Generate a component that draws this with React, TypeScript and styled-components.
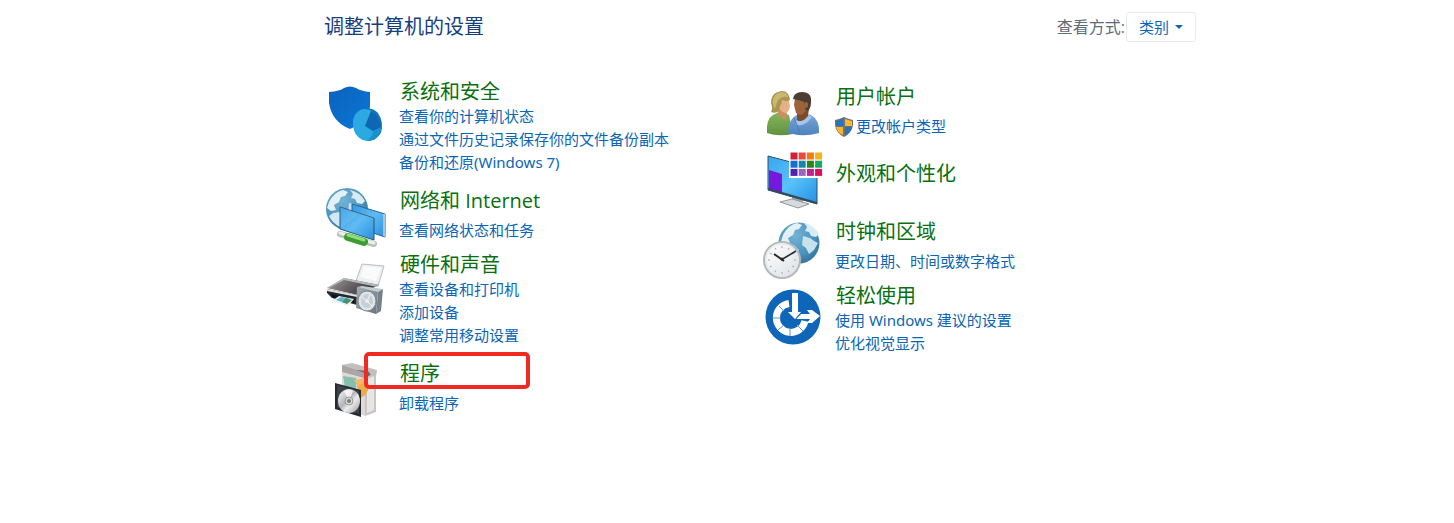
import React from 'react';
import styled, { createGlobalStyle } from 'styled-components';

const GlobalStyle = createGlobalStyle`
  * { box-sizing: border-box; }
  body {
    margin: 0;
    background: #fff;
    font-family: "Open Sans", "Noto Sans CJK SC", sans-serif;
    font-size: 15px;
  }
`;

const Page = styled.main`
  padding: 12px 258px 24px 324px;
`;

const Header = styled.header`
  display: flex;
  align-items: center;
  justify-content: space-between;
  height: 30px;
  margin-bottom: 37px;
`;

const PageTitle = styled.h1`
  margin: 0;
  font-size: 20px;
  line-height: 30px;
  font-weight: 400;
  color: #14407f;
  white-space: nowrap;
`;

const ViewBy = styled.div`
  display: flex;
  align-items: center;
  gap: 1px;
  white-space: nowrap;
`;

const ViewLabel = styled.label`
  font-size: 16px;
  line-height: 30px;
  color: #5f6b76;
`;

const SelectWrap = styled.span`
  display: grid;
  align-items: center;
  width: 70px;

  & > * { grid-area: 1 / 1; }
  & > svg { justify-self: end; margin-right: 13px; pointer-events: none; }
`;

const ViewSelect = styled.select`
  appearance: none;
  width: 100%;
  height: 30px;
  padding: 0 0 0 12px;
  border: 1px solid #e6ebf0;
  border-radius: 3px;
  background: #fff;
  font: inherit;
  color: #0a66b4;
`;

const Columns = styled.div`
  display: grid;
  grid-template-columns: 1fr 1fr;
`;

const Column = styled.div<{ $top?: number }>`
  padding-top: ${({ $top = 0 }) => $top}px;
`;

type Density = 'list' | 'single' | 'bare';

const Item = styled.section<{ $kind: Density }>`
  position: relative;
  display: grid;
  grid-template-columns: 64px 1fr;
  column-gap: 11px;
  min-height: ${({ $kind }) => ($kind === 'bare' ? 71 : 64)}px;
  padding-bottom: ${({ $kind }) => ($kind === 'list' ? 14 : 0)}px;
`;

const Picture = styled.svg`
  width: 64px;
  height: 64px;
  overflow: visible;
`;

const Body = styled.div<{ $kind: Density }>`
  padding-top: ${({ $kind }) => ($kind === 'bare' ? 13 : 0)}px;
  white-space: nowrap;
`;

const ItemTitle = styled.h2<{ $kind: Density }>`
  margin: 0 0 ${({ $kind }) => ($kind === 'single' ? 5 : 0)}px;
  padding-left: 1px;
  font-size: 20px;
  line-height: 26px;
  font-weight: 400;
`;

const TitleLink = styled.a`
  color: #0a700f;
  text-decoration: none;
`;

const Tasks = styled.ul`
  list-style: none;
  margin: 0;
  padding: 0;
  font-family: "Noto Sans", "Noto Sans CJK SC", sans-serif;
`;

const Task = styled.li`
  height: 23px;
  line-height: 23px;
`;

const TaskLink = styled.a`
  display: inline-flex;
  align-items: center;
  gap: 1px;
  white-space: pre;
  color: #0a66b4;
  text-decoration: none;
`;

const Highlight = styled.div`
  position: absolute;
  left: 40px;
  top: -9px;
  width: 166px;
  height: 37px;
  border: 4px solid #f02a22;
  border-radius: 5px;
  pointer-events: none;
`;

const SecurityIcon = () => (
  <Picture viewBox="0 0 64 64" aria-hidden="true">
    <defs>
      <linearGradient id="shield" x1="0" y1="0" x2="1" y2="1">
        <stop offset="0" stopColor="#0b62bd" />
        <stop offset="1" stopColor="#0a78d6" />
      </linearGradient>
    </defs>
    <path d="M5 13Q16 12 20 9Q26 6 32 9Q37 12 46 13V28Q44 42 26 50Q8 43 5 24Z" fill="url(#shield)" />
    <path d="M37 31Q47 27 54 34Q60 43 57 54Q51 62 43 62Z" fill="#1575b9" />
    <ellipse cx="42" cy="46" rx="13" ry="16" fill="#2ba9e1" transform="rotate(-12 42 46)" />
    <path d="M41 47L47 32Q56 36 57 50L49 52Z" fill="#0e67b5" />
    <path d="M49 52L57 48Q58 56 50 61L43 62Q49 57 49 52Z" fill="#1c8fce" />
  </Picture>
);

const Continents = () => (
  <>
    <path d="M-18-7Q-13-17-4-19L1-17L-2-13L-6-12L-8-7L-13-4L-11 1L-16 2L-20-1Z" fill="#e3f0f5" />
    <path d="M3-19Q13-17 18-8L15-5L10-6L8-10L4-11L6-15Z" fill="#d9ebf3" />
    <path d="M-14 4L-7 3L-2 8L-5 12L-7 18Q-15 14-18 7Z" fill="#d3e8f0" />
    <path d="M2-6L9-4L13-1L17 1L13 8L8 12L5 6L1 3Z" fill="#c7e1ed" />
  </>
);

const NetworkIcon = () => (
  <Picture viewBox="0 0 64 64" aria-hidden="true">
    <defs>
      <radialGradient id="globe" cx="0.4" cy="0.3" r="0.75">
        <stop offset="0" stopColor="#74b4d4" />
        <stop offset="0.65" stopColor="#4a93bd" />
        <stop offset="1" stopColor="#346f99" />
      </radialGradient>
      <linearGradient id="screen" x1="0" y1="0" x2="1" y2="1">
        <stop offset="0" stopColor="#2e98e4" />
        <stop offset="0.5" stopColor="#61bbf2" />
        <stop offset="1" stopColor="#2790e1" />
      </linearGradient>
    </defs>
    <circle cx="23" cy="21" r="21" fill="url(#globe)" />
    <g transform="translate(23 21)"><Continents /></g>
    <path d="M28 16L61 26V49L28 38Z" fill="url(#screen)" stroke="#286695" />
    <path d="M59 26L61 26V49L59 48Z" fill="#a9c5d6" />
    <path d="M16 19L50 30V52L16 41Z" fill="url(#screen)" stroke="#2d5670" />
    <path d="M17 41L34 26L50 31V30L16 19Z" fill="#8fd1f7" opacity="0.25" />
    <path d="M16 46L50 56" stroke="#b9bfc0" strokeWidth="6" strokeLinecap="round" />
    <path d="M16 45L50 55" stroke="#eceeee" strokeWidth="3" strokeLinecap="round" />
    <path d="M24 49L40 54" stroke="#3d9d34" strokeWidth="8" strokeLinecap="round" />
    <path d="M24 47L40 52" stroke="#8be07a" strokeWidth="3" strokeLinecap="round" />
  </Picture>
);

const HardwareIcon = () => (
  <Picture viewBox="0 0 64 64" aria-hidden="true">
    <defs>
      <linearGradient id="printer" x1="0" y1="0" x2="1" y2="0.4">
        <stop offset="0" stopColor="#a4a4a6" />
        <stop offset="0.5" stopColor="#6d6769" />
        <stop offset="1" stopColor="#343236" />
      </linearGradient>
      <linearGradient id="speaker" x1="0" y1="0" x2="1" y2="1">
        <stop offset="0" stopColor="#a3adb4" />
        <stop offset="1" stopColor="#68737b" />
      </linearGradient>
    </defs>
    <path d="M38 12L60 14L54 34L32 29Z" fill="#eef0f1" stroke="#b9bec1" />
    <path d="M40 14L57 16L52 29L36 25Z" fill="#fafafa" />
    <path d="M20 26L55 33L34 43L3 36Z" fill="url(#printer)" />
    <path d="M20 26L55 33L53 35L20 28L5 36L3 36Z" fill="#b7b8ba" />
    <path d="M3 37L33 43V53L8 46L3 41Z" fill="#25282c" />
    <path d="M3 37L33 43V45L3 39Z" fill="#e1e4e6" />
    <path d="M7 42L30 47V51L8 45Z" fill="#0b151d" />
    <path d="M15 44L30 47L24 54L8 49Z" fill="#e8f1f3" />
    <path d="M17 45L26 47L21 51L12 48Z" fill="#62b2d0" />
    <path d="M22 46L28 48L23 52L18 50Z" fill="#4a9172" />
    <path d="M33 35L54 39L52 62L32 56Z" fill="url(#speaker)" />
    <path d="M33 35L38 34L59 37L54 40Z" fill="#c5ccd0" />
    <path d="M54 40L59 37L57 59L52 62Z" fill="#76818a" />
    <ellipse cx="43" cy="49" rx="9" ry="10" fill="#dfe4e7" stroke="#7b8890" />
    <ellipse cx="43" cy="49" rx="6" ry="7" fill="#c8cfd4" />
    <path d="M38 45L43 49L46 43M43 49L48 54" stroke="#f3f5f6" fill="none" />
    <circle cx="43" cy="49" r="2" fill="#e9edef" />
  </Picture>
);

const ProgramsIcon = () => (
  <Picture viewBox="0 0 64 64" aria-hidden="true">
    <defs>
      <linearGradient id="disc" x1="0" y1="0" x2="1" y2="1">
        <stop offset="0" stopColor="#fafafa" />
        <stop offset="0.45" stopColor="#b5b5b8" />
        <stop offset="0.6" stopColor="#ededed" />
        <stop offset="1" stopColor="#9c9ca0" />
      </linearGradient>
    </defs>
    <path d="M18 10L41 16V55L18 47Z" fill="#ded9d7" />
    <path d="M41 16L52 12V51L41 55Z" fill="#c9c5c5" />
    <path d="M43 18L50 15V49L43 52Z" fill="#e8e5e4" />
    <path d="M18 10L26 5L52 11L41 17Z" fill="#6d686a" />
    <path d="M18 4L28 2L53 9L52 16L47 14L44 10L22 8L18 11Z" fill="#c3bfc0" />
    <path d="M18 4V11L41 17V12Z" fill="#aaa6a8" />
    <path d="M19 15L32 17V30L21 26Z" fill="#85bfae" />
    <path d="M32 21L42 20Q46 23 44 29Q42 35 36 37L34 29Z" fill="#efaa49" />
    <path d="M30 19L41 17L42 21L34 25Z" fill="#f0ba68" />
    <path d="M11 22L37 29V56L11 48Z" fill="#26292f" />
    <path d="M13 24L35 30V53L13 46Z" fill="#3d424a" />
    <ellipse cx="25" cy="40" rx="11" ry="12" fill="url(#disc)" />
    <path d="M25 40L20 30Q25 27 29 30Z" fill="#fff" opacity="0.75" />
    <ellipse cx="25" cy="40" rx="4" ry="4" fill="#d9d9da" stroke="#97989b" />
    <circle cx="25" cy="40" r="2" fill="#77797d" />
  </Picture>
);

const UsersIcon = () => (
  <Picture viewBox="0 0 64 64" aria-hidden="true">
    <defs>
      <linearGradient id="green" x1="0" y1="0" x2="0" y2="1">
        <stop offset="0" stopColor="#89b55a" />
        <stop offset="1" stopColor="#5f923f" />
      </linearGradient>
      <linearGradient id="blue" x1="0" y1="0" x2="0" y2="1">
        <stop offset="0" stopColor="#7aa9dc" />
        <stop offset="1" stopColor="#4e82bd" />
      </linearGradient>
    </defs>
    <path d="M7 49Q6 35 13 31L19 28L29 31L33 50Q18 53 7 49Z" fill="url(#green)" />
    <path d="M18 24H26L27 31L25 37L18 30Z" fill="#c98f63" />
    <path d="M18 12Q28 10 29 17L30 22Q29 29 25 29Q19 27 18 21Z" fill="#e6b187" />
    <path d="M22 7Q29 7 30 16Q27 18 22 16Q22 20 20 22L19 27Q16 30 11 28Q13 25 11 19Q11 8 22 7Z" fill="#a99650" />
    <path d="M21 8Q27 8 28 13Q20 12 17 18L15 25Q11 18 14 13Q16 9 21 8Z" fill="#c9b870" />
    <path d="M28 49Q28 37 35 32L42 29L51 31Q60 36 59 49Q44 53 33 50Z" fill="url(#blue)" />
    <path d="M37 24H49L48 32Q42 40 37 36Z" fill="#7d4b2b" />
    <path d="M35 14H47Q49 25 43 30Q39 32 36 29L34 21Z" fill="#9d643c" />
    <path d="M33 15Q34 8 42 8Q52 8 51 18Q51 24 48 27L45 25L44 18Q40 16 33 15Z" fill="#4c3c32" />
    <ellipse cx="46" cy="21" rx="2" ry="3" fill="#9d643c" />
    <path d="M36 36Q42 40 49 31L52 33Q45 43 36 41Z" fill="#a6c6ea" />
    <path d="M34 34Q38 42 40 50" stroke="#4d7db5" fill="none" />
  </Picture>
);

const swatches = [
  ['#d02236', '#ea4b3c', '#f57b0c', '#f8b219'],
  ['#1771c9', '#1587a9', '#2b8419', '#18a965'],
  ['#5521b0', '#9866bd', '#c02098', '#d5115d'],
];

const AppearanceIcon = () => (
  <Picture viewBox="0 0 64 64" aria-hidden="true">
    <defs>
      <linearGradient id="desktop" x1="0" y1="0" x2="1" y2="1">
        <stop offset="0" stopColor="#37a4ec" />
        <stop offset="0.5" stopColor="#5ac2fb" />
        <stop offset="1" stopColor="#2490e2" />
      </linearGradient>
    </defs>
    <path d="M32 48L43 51V57L32 55Z" fill="#a2a9af" />
    <path d="M20 54L32 51L49 56L38 60Z" fill="#d7dadd" stroke="#90989f" />
    <path d="M8 8L57 21V56L8 42Z" fill="url(#desktop)" stroke="#2b516d" />
    <path d="M9 22L22 26V46L9 42Z" fill="#7719dc" />
    <path d="M8 42L57 56V54L8 40Z" fill="#344a5b" />
    <rect x="29" y="3" width="34" height="27" fill="#fff" />
    {swatches.map((row, r) =>
      row.map((color, c) => (
        <rect key={color} x={30.5 + c * 8.2} y={4.5 + r * 8.2} width="7" height="7" fill={color} />
      )),
    )}
  </Picture>
);

const ticks = Array.from({ length: 12 }, (_, i) => i * 30);

const ClockIcon = () => (
  <Picture viewBox="0 0 64 64" aria-hidden="true">
    <defs>
      <linearGradient id="dial" x1="0" y1="0" x2="1" y2="1">
        <stop offset="0" stopColor="#ffffff" />
        <stop offset="1" stopColor="#dce1e5" />
      </linearGradient>
    </defs>
    <circle cx="39" cy="24" r="20.500" fill="url(#globe)" />
    <g transform="translate(41 23)"><Continents /></g>
    <circle cx="22" cy="41" r="18" fill="url(#dial)" stroke="#b4b9bd" strokeWidth="2" />
    <circle cx="22" cy="41" r="16" fill="none" stroke="#e4e6e8" />
    {ticks.map((angle) => (
      <path key={angle} d="M22 27V29" stroke="#a5aab0" transform={`rotate(${angle} 22 41)`} />
    ))}
    <path d="M21 41L36 32" stroke="#25282b" strokeWidth="1.500" />
    <path d="M24 42L14 35" stroke="#25282b" strokeWidth="2" />
    <circle cx="22" cy="40" r="1.500" fill="#25282b" />
  </Picture>
);

const EaseIcon = () => (
  <Picture viewBox="0 0 64 64" aria-hidden="true">
    <circle cx="33" cy="34" r="27.500" fill="#0f66b8" />
    <path d="M29 20.500A14.500 14.500 0 1 0 45 38" fill="none" stroke="#fff" strokeWidth="7" />
    <path d="M13 35H21M19 23L24 28M18 47L24 42M30 53V45M43 48L37 42" stroke="#5c98d0" />
    <path d="M32 10H38V29H41L35 36L28 29H32Z" fill="#fff" />
    <path d="M35 36L41 31H50L47 27H52L60 33L52 40H47L50 36Z" fill="#fff" />
    <path d="M35 37L42 29" stroke="#0f66b8" />
  </Picture>
);

const UacShield = () => (
  <svg width="20" height="20" viewBox="1 1 20 20" aria-hidden="true">
    <path d="M10 1Q14 3 19 4V9Q18 17 10 21Q2 17 1 9V4Q6 3 10 1Z" fill="#6d7377" />
    <path d="M9 3V10H2V5Q6 4 9 3Z" fill="#2973bd" />
    <path d="M11 3Q14 4 18 5V10H11Z" fill="#fbb72c" />
    <path d="M2 11H9V19Q3 16 2 11Z" fill="#fbb72c" />
    <path d="M11 11H18Q17 16 11 19Z" fill="#2973bd" />
  </svg>
);

interface Category {
  title: string;
  icon: React.ReactNode;
  tasks: string[];
  shielded?: boolean;
  highlighted?: boolean;
}

const leftCategories: Category[] = [
  {
    title: '系统和安全',
    icon: <SecurityIcon />,
    tasks: ['查看你的计算机状态', '通过文件历史记录保存你的文件备份副本', '备份和还原(Windows 7)'],
  },
  { title: '网络和 Internet', icon: <NetworkIcon />, tasks: ['查看网络状态和任务'] },
  {
    title: '硬件和声音',
    icon: <HardwareIcon />,
    tasks: ['查看设备和打印机', '添加设备', '调整常用移动设置'],
  },
  { title: '程序', icon: <ProgramsIcon />, tasks: ['卸载程序'], highlighted: true },
];

const rightCategories: Category[] = [
  { title: '用户帐户', icon: <UsersIcon />, tasks: ['更改帐户类型'], shielded: true },
  { title: '外观和个性化', icon: <AppearanceIcon />, tasks: [] },
  { title: '时钟和区域', icon: <ClockIcon />, tasks: ['更改日期、时间或数字格式'] },
  { title: '轻松使用', icon: <EaseIcon />, tasks: ['使用 Windows 建议的设置', '优化视觉显示'] },
];

const CategoryItem = ({ title, icon, tasks, shielded, highlighted }: Category) => {
  const kind: Density = tasks.length === 0 ? 'bare' : tasks.length === 1 ? 'single' : 'list';
  return (
    <Item $kind={kind}>
      {icon}
      <Body $kind={kind}>
        <ItemTitle $kind={kind}>
          <TitleLink href="#">{title}</TitleLink>
        </ItemTitle>
        {tasks.length > 0 && (
          <Tasks>
            {tasks.map((task) => (
              <Task key={task}>
                <TaskLink href="#">
                  {shielded && <UacShield />}
                  {task}
                </TaskLink>
              </Task>
            ))}
          </Tasks>
        )}
      </Body>
      {highlighted && <Highlight />}
    </Item>
  );
};

export default function App() {
  return (
    <Page lang="zh-CN">
      <GlobalStyle />
      <Header>
        <PageTitle>调整计算机的设置</PageTitle>
        <ViewBy>
          <ViewLabel htmlFor="view-by">查看方式:</ViewLabel>
          <SelectWrap>
            <ViewSelect id="view-by" defaultValue="category">
              <option value="category">类别</option>
              <option value="large">大图标</option>
              <option value="small">小图标</option>
            </ViewSelect>
            <svg width="8" height="4" viewBox="0 0 8 4" aria-hidden="true">
              <path d="M0 0H8L4 4Z" fill="#0a66b4" />
            </svg>
          </SelectWrap>
        </ViewBy>
      </Header>
      <Columns>
        <Column>
          {leftCategories.map((category) => (
            <CategoryItem key={category.title} {...category} />
          ))}
        </Column>
        <Column $top={5}>
          {rightCategories.map((category) => (
            <CategoryItem key={category.title} {...category} />
          ))}
        </Column>
      </Columns>
    </Page>
  );
}
